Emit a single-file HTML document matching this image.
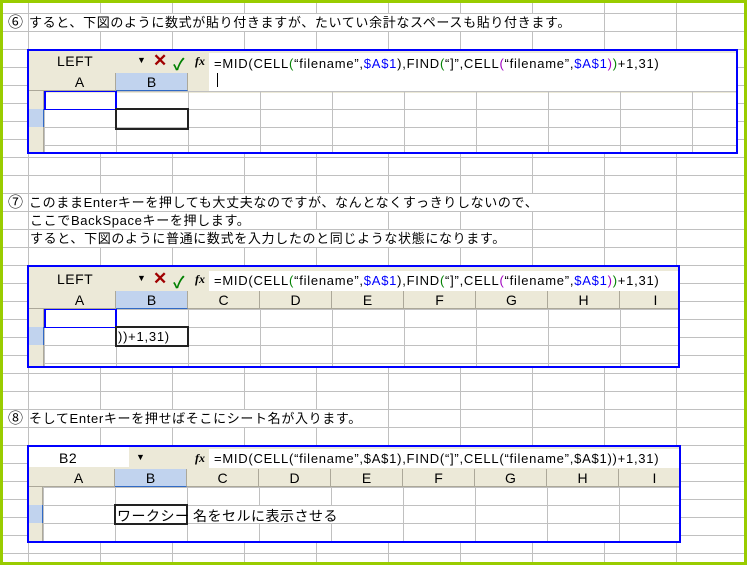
<!DOCTYPE html>
<html><head><meta charset="utf-8"><style>
*{margin:0;padding:0;box-sizing:border-box}
body{width:747px;height:565px;overflow:hidden;position:relative;background:#fff;
font-family:"Liberation Sans","Noto Sans CJK JP",sans-serif;font-size:13px;color:#000}
.bg{position:absolute;left:0;top:0;width:747px;height:565px;
background-image:linear-gradient(to right,#c0c0c0 1px,transparent 1px),linear-gradient(to bottom,#c0c0c0 1px,transparent 1px);
background-size:72px 18px;background-position:28px 13px}
.gl{position:absolute;background:#99cc00}
.t{position:absolute;background:#fff;height:17px;line-height:17px;white-space:nowrap;letter-spacing:0.65px}
.n{position:absolute;background:#fff;height:17px;line-height:17px;font-size:15px}
.box{position:absolute;border:2px solid #0000ff;background:#fff;overflow:hidden}
.bar{position:absolute;left:0;top:0;right:0;background:#ece9d8}
.grid{position:absolute;background-image:linear-gradient(to right,#c0c0c0 1px,transparent 1px),linear-gradient(to bottom,#c0c0c0 1px,transparent 1px);background-size:72px 18px}
.hdr{position:absolute;height:18px;background:#ece9d8;border-bottom:1px solid #aca899}
.hc{position:absolute;top:0;height:18px;width:72px;border-right:1px solid #aca899;text-align:center;line-height:18px;font-size:14px}
.rh{position:absolute;width:15px;background:#ece9d8;border-right:1px solid #aca899}
.fx{position:absolute;font-style:italic;font-family:"Liberation Serif",serif;font-size:12px;font-weight:bold}
.g{color:#008000}.b{color:#0000ff}.p{color:#a000c0}
.f{position:absolute;white-space:nowrap;letter-spacing:0.75px;font-size:13px}
.lb{position:absolute;font-size:14px;letter-spacing:0.5px}
</style></head><body>
<div class="bg"></div>
<div class="gl" style="left:0;top:0;width:747px;height:3px"></div>
<div class="gl" style="left:0;top:0;width:3px;height:565px"></div>
<div class="gl" style="left:744px;top:0;width:3px;height:565px"></div>
<div class="gl" style="left:0;top:562px;width:747px;height:3px"></div>

<div class="n" style="left:8px;top:14px">⑥</div>
<div class="t" style="left:29px;top:14px">すると、下図のように数式が貼り付きますが、たいてい余計なスペースも貼り付きます。</div>
<div class="n" style="left:8px;top:194px">⑦</div>
<div class="t" style="left:29px;top:194px">このままEnterキーを押しても大丈夫なのですが、なんとなくすっきりしないので、</div>
<div class="t" style="left:30px;top:212px">ここでBackSpaceキーを押します。</div>
<div class="t" style="left:30px;top:230px">すると、下図のように普通に数式を入力したのと同じような状態になります。</div>
<div class="n" style="left:8px;top:410px">⑧</div>
<div class="t" style="left:29px;top:410px">そしてEnterキーを押せばそこにシート名が入ります。</div>

<!-- box1 -->
<div class="box" style="left:27px;top:49px;width:711px;height:105px">
 <div class="bar" style="height:42px"></div>
 <div class="lb" style="left:28px;top:2px">LEFT</div>
 <div style="position:absolute;left:108px;top:4px;font-size:9px">▼</div>
 <div style="position:absolute;left:124px;top:0px;color:#a00000;font-size:17px;font-weight:bold">✕</div>
 <div style="position:absolute;left:144px;top:0px;color:#008000;font-size:16px;font-weight:bold">✓</div>
 <div class="fx" style="left:166px;top:3px">fx</div>
 <div style="position:absolute;left:180px;top:2px;right:0;height:38px;background:#fff"></div>
 <div class="f" style="left:185px;top:5px">=MID(CELL<span class="g">(</span>“filename”,<span class="b">$A$1</span>),FIND<span class="g">(</span>“]”,CELL<span class="p">(</span>“filename”,<span class="b">$A$1</span><span class="p">)</span><span class="g">)</span>+1,31)</div>
 <div style="position:absolute;left:188px;top:22px;width:1px;height:14px;background:#000"></div>
 <div class="hdr" style="left:0;top:22px;width:159px">
  <div class="hc" style="left:15px">A</div><div class="hc" style="left:87px;background:#c1d3ee;border-bottom:1px solid #316ac5">B</div>
 </div>
 <div class="rh" style="left:0;top:40px;height:70px"></div>
 <div class="rh" style="left:0;top:58px;height:18px;background:#c1d3ee;border-right-color:#316ac5"></div>
 <div class="grid" style="left:15px;top:40px;width:700px;height:70px;background-position:0 0"></div>
 <div style="position:absolute;left:15px;top:40px;width:73px;height:19px;border:2px solid #0000ff;border-bottom-width:1px;border-top-width:1px"></div>
 <div style="position:absolute;left:86px;top:57px;width:74px;height:22px;border:2px solid #222"></div>
</div>

<!-- box2 -->
<div class="box" style="left:27px;top:265px;width:653px;height:103px">
 <div class="bar" style="height:24px"></div>
 <div class="lb" style="left:28px;top:4px">LEFT</div>
 <div style="position:absolute;left:108px;top:6px;font-size:9px">▼</div>
 <div style="position:absolute;left:124px;top:2px;color:#a00000;font-size:17px;font-weight:bold">✕</div>
 <div style="position:absolute;left:144px;top:2px;color:#008000;font-size:16px;font-weight:bold">✓</div>
 <div class="fx" style="left:166px;top:5px">fx</div>
 <div style="position:absolute;left:180px;top:4px;right:0;height:20px;background:#fff"></div>
 <div class="f" style="left:185px;top:6px">=MID(CELL<span class="g">(</span>“filename”,<span class="b">$A$1</span>),FIND<span class="g">(</span>“]”,CELL<span class="p">(</span>“filename”,<span class="b">$A$1</span><span class="p">)</span><span class="g">)</span>+1,31)</div>
 <div class="hdr" style="left:0;top:24px;width:660px">
  <div class="hc" style="left:15px">A</div><div class="hc" style="left:87px;background:#c1d3ee;border-bottom:1px solid #316ac5">B</div>
  <div class="hc" style="left:159px">C</div><div class="hc" style="left:231px">D</div><div class="hc" style="left:303px">E</div><div class="hc" style="left:375px">F</div><div class="hc" style="left:447px">G</div><div class="hc" style="left:519px">H</div><div class="hc" style="left:591px">I</div>
 </div>
 <div class="rh" style="left:0;top:42px;height:60px"></div>
 <div class="rh" style="left:0;top:60px;height:18px;background:#c1d3ee;border-right-color:#316ac5"></div>
 <div class="grid" style="left:15px;top:42px;width:650px;height:60px"></div>
 <div style="position:absolute;left:15px;top:42px;width:73px;height:19px;border:2px solid #0000ff;border-width:1px 2px"></div>
 <div style="position:absolute;left:86px;top:59px;width:74px;height:21px;border:2px solid #222"></div>
 <div class="f" style="left:89px;top:62px">))+1,31)</div>
</div>

<!-- box3 -->
<div class="box" style="left:27px;top:445px;width:654px;height:98px">
 <div class="bar" style="height:22px"></div>
 <div style="position:absolute;left:0;top:0;width:100px;height:20px;background:#fff"></div>
 <div class="lb" style="left:30px;top:3px">B2</div>
 <div style="position:absolute;left:107px;top:5px;font-size:9px">▼</div>
 <div class="fx" style="left:166px;top:4px">fx</div>
 <div style="position:absolute;left:180px;top:2px;right:0;height:19px;background:#fff"></div>
 <div class="f" style="left:185px;top:4px">=MID(CELL(“filename”,$A$1),FIND(“]”,CELL(“filename”,$A$1))+1,31)</div>
 <div class="hdr" style="left:0;top:22px;width:660px">
  <div class="hc" style="left:14px">A</div><div class="hc" style="left:86px;background:#c1d3ee;border-bottom:1px solid #316ac5">B</div>
  <div class="hc" style="left:158px">C</div><div class="hc" style="left:230px">D</div><div class="hc" style="left:302px">E</div><div class="hc" style="left:374px">F</div><div class="hc" style="left:446px">G</div><div class="hc" style="left:518px">H</div><div class="hc" style="left:590px">I</div>
 </div>
 <div class="rh" style="left:0;top:40px;height:60px;width:14px"></div>
 <div class="rh" style="left:0;top:58px;height:18px;width:14px;background:#c1d3ee;border-right-color:#316ac5"></div>
 <div class="grid" style="left:14px;top:40px;width:650px;height:60px"></div>
 <div style="position:absolute;left:85px;top:57px;width:74px;height:21px;border:2px solid #222;background:#fff;overflow:hidden"></div>
 <div class="f" style="left:88px;top:59px;font-size:14px;letter-spacing:0.5px">ワークシー</div>
 <div style="position:absolute;left:160px;top:59px;width:150px;height:17px;background:#fff"></div>
 <div class="f" style="left:164px;top:59px;font-size:14px;letter-spacing:0.5px">名をセルに表示させる</div>
</div>
</body></html>
